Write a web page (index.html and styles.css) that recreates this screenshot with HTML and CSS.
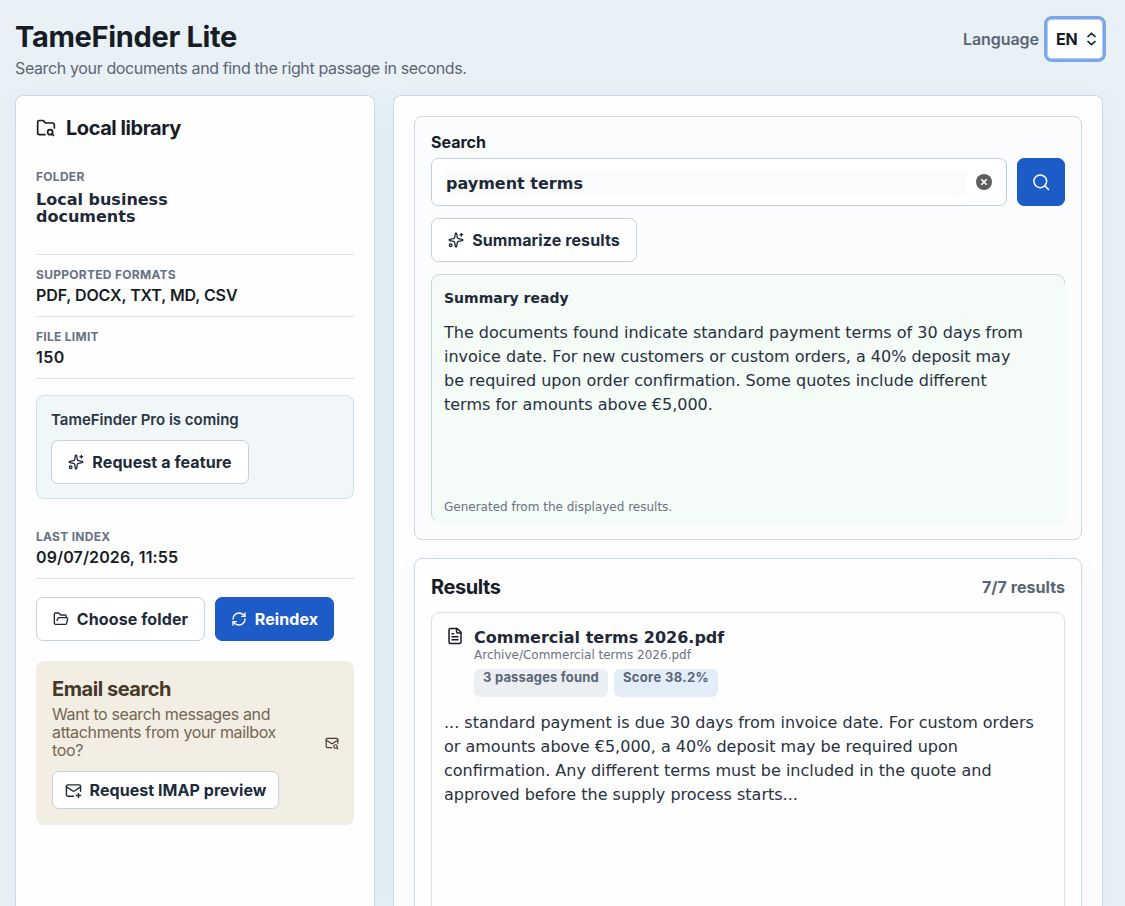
FILE: index.html
```html
<!doctype html>
<html lang="en">

    <head>
        <title>TameFinder Lite</title>
        <meta charset="UTF-8">
        <meta name="viewport" content="width=device-width, initial-scale=1">
        <link rel="stylesheet" href="styles.css">
    </head>

    <body>
        <div class="header">
            <div class="brand">
                <h1>TameFinder Lite</h1>
                <p>Search your documents and find the right passage in seconds.</p>
            </div>
            <div class="language">
                <span class="language-label">Language</span>
                <button class="select" type="button">
                    <span>EN</span>
                    <svg width="11" height="14" viewBox="0 0 11 14"><path d="M1.5 5 5.5 1.3 9.5 5M1.5 9l4 3.7 4-3.7"/></svg>
                </button>
            </div>
        </div>

        <div class="row">
            <div class="side">
                <div class="side-title">
                    <svg class="icon" width="20" height="20" viewBox="0 0 24 24"><path d="M10.7 20H4a2 2 0 0 1-2-2V5a2 2 0 0 1 2-2h3.9a2 2 0 0 1 1.7.9l.8 1.2a2 2 0 0 0 1.7.9H20a2 2 0 0 1 2 2v4.1"/><path d="m21 21-1.9-1.9"/><circle cx="17" cy="17" r="3"/></svg>
                    <h2>Local library</h2>
                </div>

                <div class="info info-folder">
                    <h5>Folder</h5>
                    <p class="folder">Local business<br>documents</p>
                </div>
                <div class="info">
                    <h5>Supported formats</h5>
                    <p class="formats">PDF, DOCX, TXT, MD, CSV</p>
                </div>
                <div class="info">
                    <h5>File limit</h5>
                    <p class="limit">150</p>
                </div>

                <div class="pro">
                    <h3>TameFinder Pro is coming</h3>
                    <button class="btn btn-feature" type="button">
                        <svg class="icon" width="16" height="16" viewBox="0 0 24 24"><path d="M11 2.8a1 1 0 0 1 2 0l1 5.6a2 2 0 0 0 1.6 1.6l5.6 1a1 1 0 0 1 0 2l-5.6 1a2 2 0 0 0-1.6 1.6l-1 5.6a1 1 0 0 1-2 0l-1-5.6A2 2 0 0 0 8.4 14l-5.6-1a1 1 0 0 1 0-2l5.6-1A2 2 0 0 0 10 8.4z"/><path d="M20 2v4M22 4h-4"/><circle cx="4" cy="20" r="2"/></svg>
                        Request a feature
                    </button>
                </div>

                <div class="info info-index">
                    <h5>Last index</h5>
                    <p class="date">09/07/2026, 11:55</p>
                </div>

                <div class="actions">
                    <button class="btn btn-choose" type="button">
                        <svg class="icon" width="16" height="16" viewBox="0 0 24 24"><path d="m6 14 1.5-2.9A2 2 0 0 1 9.24 10H20a2 2 0 0 1 1.94 2.5l-1.54 6a2 2 0 0 1-1.95 1.5H4a2 2 0 0 1-2-2V5a2 2 0 0 1 2-2h3.9a2 2 0 0 1 1.69.9l.81 1.2a2 2 0 0 0 1.67.9H18a2 2 0 0 1 2 2v2"/></svg>
                        Choose folder
                    </button>
                    <button class="btn btn-primary" type="button">
                        <svg class="icon" width="16" height="16" viewBox="0 0 24 24"><path d="M3 12a9 9 0 0 1 9-9 9.75 9.75 0 0 1 6.74 2.74L21 8"/><path d="M21 3v5h-5"/><path d="M21 12a9 9 0 0 1-9 9 9.75 9.75 0 0 1-6.74-2.74L3 16"/><path d="M8 16H3v5"/></svg>
                        Reindex
                    </button>
                </div>

                <div class="email">
                    <div>
                        <h2>Email search</h2>
                        <p>Want to search messages and<br>attachments from your mailbox<br>too?</p>
                        <button class="btn btn-imap" type="button">
                            <svg class="icon" width="17" height="17" viewBox="0 0 24 24"><path d="M22 13V6a2 2 0 0 0-2-2H4a2 2 0 0 0-2 2v12c0 1.1.9 2 2 2h8"/><path d="m22 7-8.97 5.7a1.94 1.94 0 0 1-2.06 0L2 7"/><path d="M19 16v6M16 19h6"/></svg>
                            Request IMAP preview
                        </button>
                    </div>
                    <svg class="icon mail" width="14" height="14" viewBox="0 0 24 24"><path d="M22 12.5V6a2 2 0 0 0-2-2H4a2 2 0 0 0-2 2v12c0 1.1.9 2 2 2h7.5"/><path d="m22 7-8.97 5.7a1.94 1.94 0 0 1-2.06 0L2 7"/><circle cx="18" cy="18" r="3"/><path d="m22 22-1.5-1.5"/></svg>
                </div>
            </div>

            <div class="main">
                <div class="search">
                    <h3>Search</h3>
                    <div class="search-row">
                        <div class="field">
                            <span class="query">payment terms</span>
                            <svg width="16" height="16" viewBox="0 0 16 16"><circle cx="8" cy="8" r="8" fill="#5e5e5e"/><path d="m5.3 5.3 5.4 5.4M10.7 5.3l-5.4 5.4" stroke="#fff" stroke-width="1.6"/></svg>
                        </div>
                        <button class="btn btn-primary btn-search" type="button">
                            <svg class="icon" width="18" height="18" viewBox="0 0 24 24"><circle cx="11" cy="11" r="8.5"/><path d="m22 22-4.7-4.7"/></svg>
                        </button>
                    </div>
                    <button class="btn btn-summarize" type="button">
                        <svg class="icon" width="16" height="16" viewBox="0 0 24 24"><path d="M11 2.8a1 1 0 0 1 2 0l1 5.6a2 2 0 0 0 1.6 1.6l5.6 1a1 1 0 0 1 0 2l-5.6 1a2 2 0 0 0-1.6 1.6l-1 5.6a1 1 0 0 1-2 0l-1-5.6A2 2 0 0 0 8.4 14l-5.6-1a1 1 0 0 1 0-2l5.6-1A2 2 0 0 0 10 8.4z"/><path d="M20 2v4M22 4h-4"/><circle cx="4" cy="20" r="2"/></svg>
                        Summarize results
                    </button>
                    <div class="summary">
                        <h4>Summary ready</h4>
                        <p>The documents found indicate standard payment terms of 30 days from<br>invoice date. For new customers or custom orders, a 40% deposit may<br>be required upon order confirmation. Some quotes include different<br>terms for amounts above €5,000.</p>
                        <small>Generated from the displayed results.</small>
                    </div>
                </div>

                <div class="results">
                    <div class="results-head">
                        <h2>Results</h2>
                        <span>7/7 results</span>
                    </div>
                    <div class="result">
                        <div class="result-head">
                            <svg class="icon" width="18" height="18" viewBox="0 0 24 24"><path d="M15 2H6a2 2 0 0 0-2 2v16a2 2 0 0 0 2 2h12a2 2 0 0 0 2-2V7z"/><path d="M14 2v4a2 2 0 0 0 2 2h4"/><path d="M10 9H8M16 13H8M16 17H8"/></svg>
                            <div>
                                <h3>Commercial terms 2026.pdf</h3>
                                <p class="path">Archive/Commercial terms 2026.pdf</p>
                                <div class="tags">
                                    <span class="tag tag-count">3 passages found</span>
                                    <span class="tag tag-score">Score 38.2%</span>
                                </div>
                            </div>
                        </div>
                        <p class="excerpt">... standard payment is due 30 days from invoice date. For custom orders<br>or amounts above €5,000, a 40% deposit may be required upon<br>confirmation. Any different terms must be included in the quote and<br>approved before the supply process starts...</p>
                    </div>
                </div>
            </div>
        </div>
    </body>

</html>
```
FILE: styles.css
```css
* {
  box-sizing: border-box;
  margin: 0;
  padding: 0;
}

/* Style the body */
body {
  font-family: Inter, Arial, sans-serif;
  font-size: 16px;
  line-height: 18px;
  color: #171c26;
  background: #e9f1f7;
  height: 906px;
  overflow: hidden;
  white-space: nowrap;
}

.icon {
  flex: none;
  fill: none;
  stroke: currentColor;
  stroke-width: 2;
  stroke-linecap: round;
  stroke-linejoin: round;
}

/* Header */
.header {
  display: flex;
  justify-content: space-between;
  height: 95px;
  padding: 16px 19px 0 15px;
}

.header h1 {
  padding-top: 1px;
  font-size: 29px;
  line-height: 40px;
  letter-spacing: -0.32px;
}

.header p {
  margin-top: 2px;
  color: #5c6675;
  letter-spacing: -0.37px;
}

.language {
  display: flex;
  align-items: center;
  height: 46px;
  gap: 5px;
}

.language-label {
  color: #5a6575;
  font-weight: 600;
  letter-spacing: -0.05px;
}

.select {
  display: flex;
  align-items: center;
  gap: 9px;
  width: 62px;
  height: 46px;
  padding-left: 9px;
  background: white;
  border: 3px solid #7ba7e8;
  border-radius: 8px;
  box-shadow: inset 0 0 0 1px #b3cef6;
  font: bold 16px Inter, sans-serif;
  letter-spacing: -0.3px;
  color: #171c26;
}

.select svg {
  fill: none;
  stroke: #171c26;
  stroke-width: 1.7;
}

/* Two columns next to each other */
.row {
  display: flex;
  gap: 18px;
  padding: 0 22px 0 15px;
  height: 811px;
}

.side,
.main {
  overflow: hidden;
  background: #fefefe;
  border: 1px solid #ccd9e5;
  border-bottom: 0;
  border-radius: 8px 8px 0 0;
  box-shadow: 0 10px 30px rgba(40, 80, 110, 0.05);
  padding: 20px 20px 0;
}

.side {
  width: 360px;
}

.main {
  flex: 1;
}

h2 {
  font-size: 20px;
  line-height: 24px;
  letter-spacing: -0.45px;
}

.side-title {
  display: flex;
  align-items: center;
  gap: 10px;
}

.info {
  height: 62px;
  padding-top: 12px;
  border-bottom: 1px solid #dae3ea;
}

.info h5 {
  font-size: 12px;
  font-weight: 700;
  line-height: 16px;
  letter-spacing: 0.28px;
  text-transform: uppercase;
  color: #677286;
}

.info p {
  margin-top: 3px;
  font-weight: 600;
}

.info .formats {
  letter-spacing: -0.1px;
}

.info .limit {
  letter-spacing: 0.4px;
}

.info .date {
  letter-spacing: 0.12px;
}

.info-folder {
  height: 97px;
  margin-top: 18px;
  padding-top: 11px;
}

.info .folder {
  margin-top: 6px;
  font: bold 16px/17px "DejaVu Sans", sans-serif;
  color: #1f2937;
}

.info-index {
  height: 63px;
  margin-top: 17px;
  padding-top: 13px;
}

/* Buttons */
.btn {
  display: flex;
  align-items: center;
  justify-content: center;
  gap: 8px;
  height: 44px;
  background: white;
  border: 1px solid #c5d1de;
  border-radius: 7px;
  color: #202b3a;
  font: bold 16px Inter, sans-serif;
  letter-spacing: 0.1px;
}

.btn-primary {
  background: #1d5cc7;
  border-color: #1d5cc7;
  color: white;
}

.pro {
  height: 104px;
  margin-top: 16px;
  padding: 15px 14px;
  background: #f1f6f9;
  border: 1px solid #d1dfe8;
  border-radius: 8px;
}

.pro h3 {
  font-size: 15px;
  font-weight: 600;
  line-height: 18px;
  color: #2a3543;
}

.btn-feature {
  width: 198px;
  margin-top: 11px;
}

.actions {
  display: flex;
  gap: 10px;
  margin-top: 18px;
}

.btn-choose {
  width: 169px;
}

.actions .btn-primary {
  width: 119px;
}

.email {
  display: flex;
  align-items: center;
  justify-content: space-between;
  height: 164px;
  margin-top: 20px;
  padding: 0 15px 0 16px;
  background: #f3eee4;
  border-radius: 8px;
  color: #463928;
}

.email p {
  margin-top: 4px;
  color: #746650;
  letter-spacing: -0.35px;
}

.btn-imap {
  width: 227px;
  height: 38px;
  margin-top: 12px;
  letter-spacing: 0.05px;
}

/* Search panel */
.search {
  height: 424px;
  padding: 16px;
  background: #fafcfe;
  border: 1px solid #d0dbe5;
  border-radius: 8px;
}

.search h3 {
  font-size: 16px;
  font-weight: 700;
}

.search-row {
  display: flex;
  gap: 10px;
  margin-top: 7px;
}

.field {
  display: flex;
  align-items: center;
  justify-content: space-between;
  flex: 1;
  height: 48px;
  padding: 0 14px 0 13px;
  background: white;
  border: 1px solid #c1cfdc;
  border-radius: 7px;
}

.query {
  width: 521px;
  height: 25px;
  margin-top: 2px;
  padding-left: 1px;
  background: #fafbfd;
  font: bold 16px/26px "DejaVu Sans", sans-serif;
  color: #1f2937;
}

.btn-search {
  width: 48px;
  height: 48px;
}

.btn-summarize {
  width: 206px;
  margin-top: 12px;
}

.summary {
  position: relative;
  height: 248px;
  margin-top: 12px;
  padding: 14px 12px;
  background: #f5fbf8;
  border: 1px solid #c0dfcf;
  border-radius: 8px;
  font-family: "DejaVu Sans", sans-serif;
  color: #27313f;
}

/* Covers the frame below the top corner */
.summary::before {
  content: "";
  position: absolute;
  top: 9px;
  right: -2px;
  bottom: -2px;
  left: 3px;
  background: #f5fbf7;
}

.summary h4,
.summary p,
.summary small {
  position: relative;
  display: block;
}

.summary h4 {
  font-size: 14px;
  color: #1f2937;
}

.summary p {
  margin-top: 14px;
  line-height: 24px;
}

.summary small {
  margin-top: 81px;
  font-size: 12px;
  color: #6b7280;
}

/* Results panel */
.results {
  height: 420px;
  margin-top: 18px;
  padding: 16px;
  background: #fefefe;
  border: 1px solid #ccd9e5;
  border-radius: 8px;
  box-shadow: 0 8px 24px rgba(40, 70, 110, 0.07);
}

.results-head {
  display: flex;
  align-items: center;
  justify-content: space-between;
}

.results-head span {
  font-weight: 700;
  letter-spacing: 0.05px;
  color: #5a6575;
}

.result {
  height: 360px;
  margin-top: 13px;
  padding: 14px 12px;
  border: 1px solid #dce2e8;
  border-radius: 8px;
  font-family: "DejaVu Sans", sans-serif;
}

.result-head {
  display: flex;
  gap: 10px;
  padding-left: 2px;
}

.result h3 {
  font-size: 16px;
  line-height: 22px;
  color: #1f2937;
}

.path {
  margin-top: -1px;
  font-size: 12px;
  line-height: 14px;
  color: #6b7280;
}

.tags {
  display: flex;
  gap: 6px;
  margin-top: 7px;
}

.tag {
  width: 134px;
  height: 28px;
  border-radius: 6px;
  background: #ebeff3;
  font: bold 13px/17px Inter, sans-serif;
  letter-spacing: 0.18px;
  text-align: center;
  color: #5a6575;
}

.tag-score {
  width: 104px;
  background: #e3edf9;
  letter-spacing: 0.35px;
}

.excerpt {
  margin-top: 14px;
  line-height: 24px;
  color: #27313f;
}
```
